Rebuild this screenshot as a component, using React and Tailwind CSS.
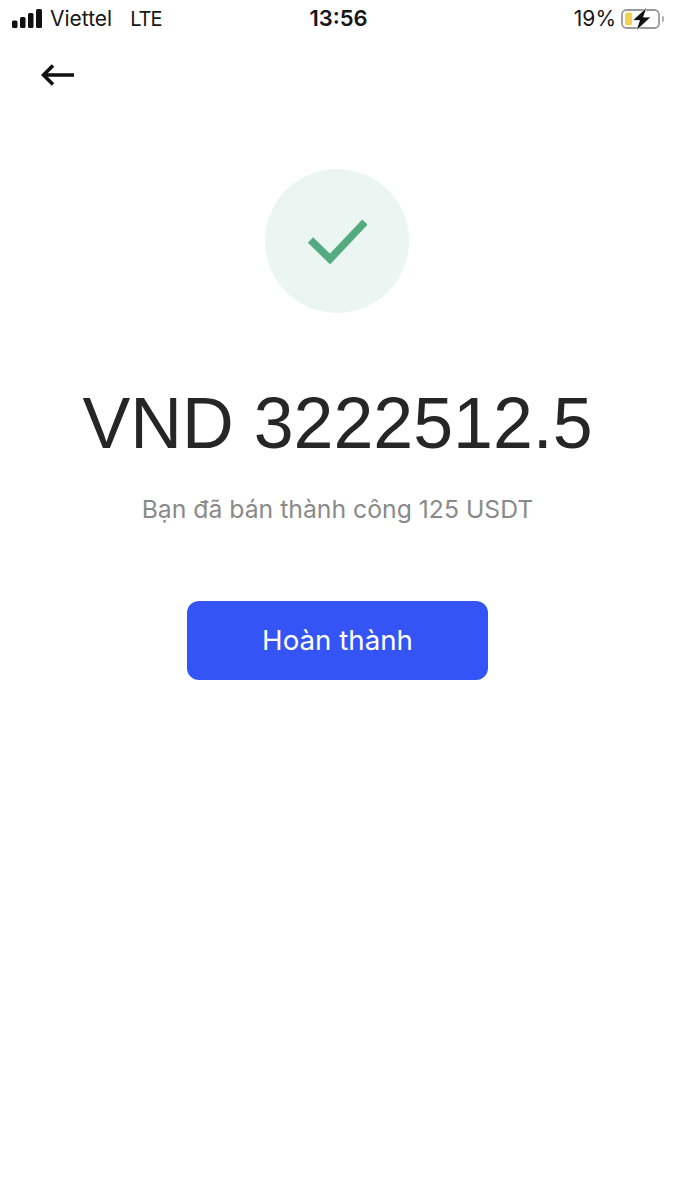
import React from 'react';

const SignalBars = () => (
  <svg width="30" height="20" viewBox="0 0 30 20" className="block">
    <rect x="0" y="11.5" width="5.5" height="7.5" rx="1.5" fill="#111" />
    <rect x="8" y="8" width="5.5" height="11" rx="1.5" fill="#111" />
    <rect x="16" y="4" width="5.5" height="15" rx="1.5" fill="#111" />
    <rect x="24" y="0" width="6" height="19" rx="1.5" fill="#111" />
  </svg>
);

const Battery = () => (
  <svg width="44" height="24" viewBox="0 0 44 24" className="block">
    <rect x="1" y="3" width="37" height="18" rx="4.5" fill="none" stroke="#9a9a9a" strokeWidth="1.8" />
    <rect x="4" y="5.5" width="7" height="13" rx="2" fill="#f1d250" />
    <rect x="41" y="9" width="1.8" height="6" rx="0.9" fill="#a8a8a8" />
    <path d="M26 0 L11.5 13.5 H18.5 L15 24 L30 10 H22.5 Z" fill="#111" stroke="#fff" strokeWidth="0.8" />
  </svg>
);

export default function App() {
  return (
    <div className="h-[1200px] w-[675px] overflow-hidden bg-white font-['Liberation_Sans',Arial,sans-serif]">
      {/* Status bar */}
      <div className="grid h-[37px] grid-cols-3 items-center pl-3 pr-[10px] font-['Inter',sans-serif] text-[21px] text-[#161616]">
        <div className="flex items-center whitespace-nowrap">
          <SignalBars />
          <span className="ml-[8px]">Viettel</span>
          <span className="ml-[18px] text-[20px] tracking-[-1px]">LTE</span>
        </div>
        <div className="text-center text-[22px] font-semibold">13:56</div>
        <div className="flex items-center justify-end">
          <span>19%</span>
          <span className="ml-[5px]"><Battery /></span>
        </div>
      </div>

      {/* Back */}
      <div className="pl-[41px] pt-[26px]">
        <svg width="34" height="24" viewBox="0 0 34 24" className="block">
          <path d="M2 12 H33 M12 2.5 L2.5 12 L12 21.5" fill="none" stroke="#111" strokeWidth="3.6" />
        </svg>
      </div>

      <div className="flex flex-col items-center pt-[82px]">
        <div className="mr-[2px] flex h-[144px] w-[144px] items-center justify-center rounded-full bg-[#ebf5f2]">
          <svg width="60" height="46" viewBox="0 0 60 46" className="block">
            <path d="M3.5 22 L23 41 L58 4" fill="none" stroke="#54ab7f" strokeWidth="7.5" />
          </svg>
        </div>
        <div className="mt-[70px] text-[71.7px] leading-[80px] text-[#262626]">VND 3222512.5</div>
        <p className="mt-[30px] font-['Inter',sans-serif] text-[24.75px] leading-[32px] text-[#8a8a8a]">Bạn đã bán thành công 125 USDT</p>
        <button className="mt-[76px] h-[79px] w-[301px] rounded-[12px] bg-[#3554f6] font-['Inter',sans-serif] text-[27.7px] text-white">Hoàn thành</button>
      </div>
    </div>
  );
}
